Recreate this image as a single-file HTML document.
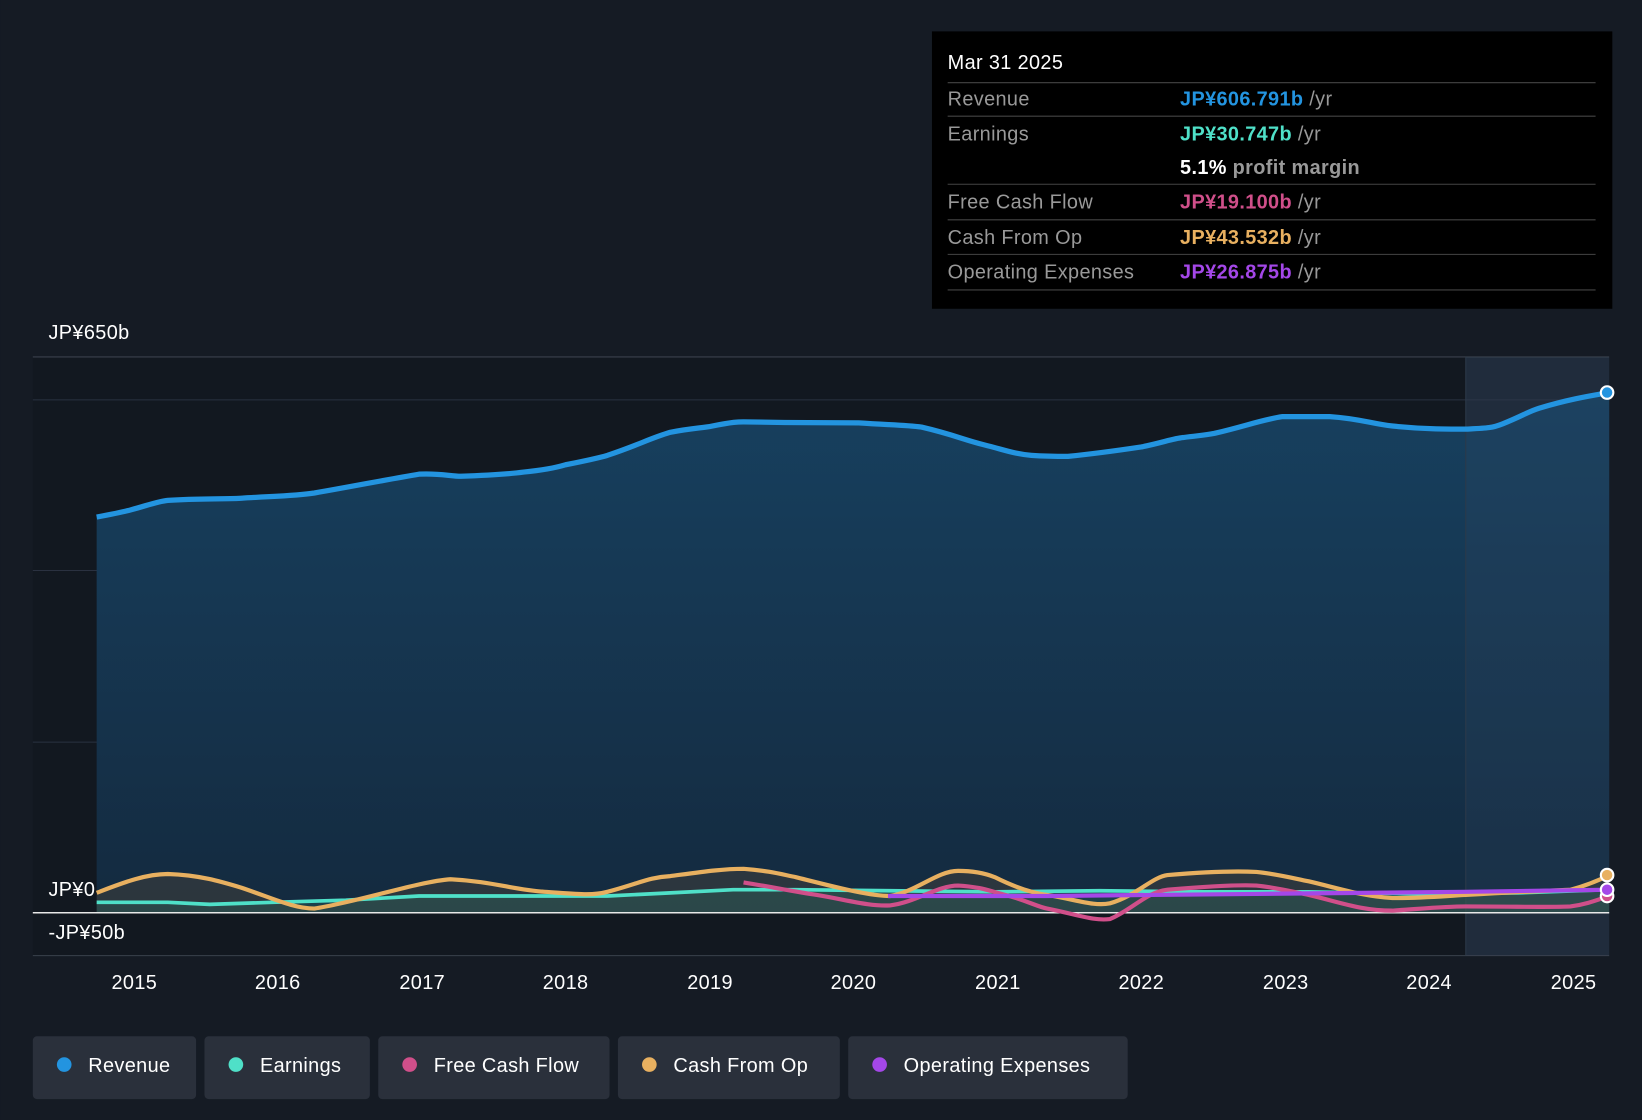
<!DOCTYPE html>
<html><head><meta charset="utf-8"><style>
html,body{margin:0;padding:0;background:#151b24;}
svg{display:block;font-family:"Liberation Sans",Roboto,sans-serif;letter-spacing:0.35px;}
</style></head><body>
<svg width="1642" height="1120" viewBox="0 0 1568 1070" xmlns="http://www.w3.org/2000/svg">
<defs>
<linearGradient id="rg" x1="0" y1="0" x2="0" y2="1"><stop offset="0" stop-color="#17405f"/><stop offset="1" stop-color="#142a3f"/></linearGradient>
</defs>
<rect width="1568" height="1070" fill="#151b24"/>
<rect x="31" y="341" width="1506" height="572" fill="#121820"/>
<rect x="1400" y="341" width="137" height="572" fill="#1b2533"/>
<line x1="31" y1="341" x2="1537" y2="341" stroke="#3a414c"/>
<line x1="31" y1="382" x2="1537" y2="382" stroke="#2a3140"/>
<line x1="31" y1="545" x2="1537" y2="545" stroke="#2a3140"/>
<line x1="31" y1="709" x2="1537" y2="709" stroke="#2a3140"/>
<line x1="31" y1="913" x2="1537" y2="913" stroke="#3a414c"/>
<path d="M92,494 C108,491 118,489 125,487 C140,483 150,479 160,478 C190,476 210,477 230,476 C260,474 280,474 300,471 C340,464 370,458 400,453 C420,452 430,455 440,455 C470,454 485,453 500,451 C520,449 530,447 540,444 C560,440 570,438 580,435 C610,425 620,419 640,413 C660,409 670,409 680,407 C700,403 705,403 710,403 C760,404 790,404 820,404 C850,406 865,406 880,408 C910,415 920,420 940,425 C960,430 970,434 985,435 C1000,436 1010,436 1020,436 C1050,433 1070,430 1090,427 C1110,423 1120,419 1130,418 C1145,416 1150,416 1160,414 C1190,407 1205,401 1225,398 C1245,398 1255,398 1270,398 C1300,400 1310,405 1330,407 C1360,410 1380,410 1400,410 C1420,409 1425,409 1435,405 C1455,397 1460,393 1470,390 C1500,381 1520,378 1537,375 L1537,872 L92,872 Z" fill="url(#rg)"/>
<rect x="1400" y="341" width="137" height="572" fill="#3a4f6a" opacity="0.18"/>
<line x1="1400" y1="341" x2="1400" y2="913" stroke="#2c3a4a"/>
<path d="M92,494 C108,491 118,489 125,487 C140,483 150,479 160,478 C190,476 210,477 230,476 C260,474 280,474 300,471 C340,464 370,458 400,453 C420,452 430,455 440,455 C470,454 485,453 500,451 C520,449 530,447 540,444 C560,440 570,438 580,435 C610,425 620,419 640,413 C660,409 670,409 680,407 C700,403 705,403 710,403 C760,404 790,404 820,404 C850,406 865,406 880,408 C910,415 920,420 940,425 C960,430 970,434 985,435 C1000,436 1010,436 1020,436 C1050,433 1070,430 1090,427 C1110,423 1120,419 1130,418 C1145,416 1150,416 1160,414 C1190,407 1205,401 1225,398 C1245,398 1255,398 1270,398 C1300,400 1310,405 1330,407 C1360,410 1380,410 1400,410 C1420,409 1425,409 1435,405 C1455,397 1460,393 1470,390 C1500,381 1520,378 1537,375" fill="none" stroke="#2394e0" stroke-width="5"/>
<path d="M92,853 C120,842 140,835 160,835 C190,836 210,842 230,848 C260,858 280,868 300,868 C340,862 400,842 430,840 C470,842 490,850 520,852 C550,854 565,856 580,852 C610,844 620,838 640,837 C670,833 690,830 710,830 C735,832 745,835 760,838 C800,848 830,856 850,856 C875,852 895,832 915,832 C930,832 940,834 950,838 C970,848 985,853 1000,855 C1030,860 1045,866 1060,863 C1085,856 1100,838 1115,836 C1150,833 1180,832 1200,833 C1220,835 1235,839 1250,842 C1280,849 1300,856 1330,858 C1360,858 1380,856 1400,855 C1450,852 1480,851 1500,850 C1515,846 1525,842 1537,836 L1537,872 L92,872 Z" fill="#5a4a3a" opacity="0.35"/>
<path d="M92,862 L160,862 L200,864 L260,862 L330,860 L400,856 L500,856 L580,856 L640,853 L700,850 L760,850 L850,851 L950,852 L1050,851 L1150,852 L1250,852 L1350,854 L1450,853 L1537,850 L1537,872 L92,872 Z" fill="#2a6a60" opacity="0.35"/>
<line x1="31" y1="872" x2="1537" y2="872" stroke="#e8e8e8" stroke-width="1.5"/>
<path d="M92,862 L160,862 L200,864 L260,862 L330,860 L400,856 L500,856 L580,856 L640,853 L700,850 L760,850 L850,851 L950,852 L1050,851 L1150,852 L1250,852 L1350,854 L1450,853 L1537,850" fill="none" stroke="#4fe0c8" stroke-width="3.5"/>
<path d="M92,853 C120,842 140,835 160,835 C190,836 210,842 230,848 C260,858 280,868 300,868 C340,862 400,842 430,840 C470,842 490,850 520,852 C550,854 565,856 580,852 C610,844 620,838 640,837 C670,833 690,830 710,830 C735,832 745,835 760,838 C800,848 830,856 850,856 C875,852 895,832 915,832 C930,832 940,834 950,838 C970,848 985,853 1000,855 C1030,860 1045,866 1060,863 C1085,856 1100,838 1115,836 C1150,833 1180,832 1200,833 C1220,835 1235,839 1250,842 C1280,849 1300,856 1330,858 C1360,858 1380,856 1400,855 C1450,852 1480,851 1500,850 C1515,846 1525,842 1537,836" fill="none" stroke="#e8b060" stroke-width="4"/>
<path d="M710,843 C740,848 760,852 780,855 C810,860 830,866 850,865 C875,862 895,846 915,846 C935,847 945,851 960,855 C980,860 990,866 1000,868 C1030,874 1045,880 1060,878 C1080,870 1095,852 1115,850 C1150,847 1180,845 1200,846 C1220,848 1235,852 1250,855 C1280,862 1300,870 1330,870 C1360,868 1380,866 1400,866 C1450,866 1480,867 1500,866 C1515,864 1525,860 1537,856" fill="none" stroke="#d04f8a" stroke-width="4"/>
<path d="M848,856 L1000,856 L1100,855 L1200,854 L1300,853 L1400,852 L1537,850" fill="none" stroke="#a447e8" stroke-width="4"/>
<circle cx="1535" cy="375" r="6" fill="#2394e0" stroke="#fff" stroke-width="2"/>
<circle cx="1535" cy="836" r="6" fill="#e8b060" stroke="#fff" stroke-width="2"/>
<circle cx="1535" cy="856" r="6" fill="#d04f8a" stroke="#fff" stroke-width="2"/>
<circle cx="1535" cy="850" r="6" fill="#a447e8" stroke="#fff" stroke-width="2"/>
<g fill="#fff" font-size="19">
<text x="46" y="324">JP¥650b</text>
<text x="46" y="856">JP¥0</text>
<text x="46" y="897">-JP¥50b</text>
</g>
<g fill="#fff" font-size="19" text-anchor="middle">
<text x="128" y="945">2015</text><text x="265" y="945">2016</text><text x="403" y="945">2017</text><text x="540" y="945">2018</text><text x="678" y="945">2019</text><text x="815" y="945">2020</text><text x="953" y="945">2021</text><text x="1090" y="945">2022</text><text x="1228" y="945">2023</text><text x="1365" y="945">2024</text><text x="1503" y="945">2025</text>
</g>
<rect x="890" y="30" width="650" height="265" fill="#000"/>
<g stroke="#444" stroke-width="1"><line x1="905" y1="79" x2="1524" y2="79"/><line x1="905" y1="111" x2="1524" y2="111"/><line x1="905" y1="176" x2="1524" y2="176"/><line x1="905" y1="210" x2="1524" y2="210"/><line x1="905" y1="243" x2="1524" y2="243"/><line x1="905" y1="277" x2="1524" y2="277"/></g>
<g font-size="19">
<text x="905" y="66" fill="#fff">Mar 31 2025</text>
<text x="905" y="101" fill="#999">Revenue</text>
<text x="905" y="134" fill="#999">Earnings</text>
<text x="905" y="199" fill="#999">Free Cash Flow</text>
<text x="905" y="233" fill="#999">Cash From Op</text>
<text x="905" y="266" fill="#999">Operating Expenses</text>
<text x="1127" y="101" font-weight="bold" fill="#2394e0">JP¥606.791b <tspan fill="#999" font-weight="normal">/yr</tspan></text>
<text x="1127" y="134" font-weight="bold" fill="#4fe0c8">JP¥30.747b <tspan fill="#999" font-weight="normal">/yr</tspan></text>
<text x="1127" y="166" font-weight="bold" fill="#fff">5.1% <tspan fill="#999">profit margin</tspan></text>
<text x="1127" y="199" font-weight="bold" fill="#d04f8a">JP¥19.100b <tspan fill="#999" font-weight="normal">/yr</tspan></text>
<text x="1127" y="233" font-weight="bold" fill="#e8b060">JP¥43.532b <tspan fill="#999" font-weight="normal">/yr</tspan></text>
<text x="1127" y="266" font-weight="bold" fill="#a447e8">JP¥26.875b <tspan fill="#999" font-weight="normal">/yr</tspan></text>
</g>
<g font-size="19" fill="#fff">
<rect x="31" y="990" width="156" height="60" rx="4" fill="#2a303b"/><circle cx="61" cy="1017" r="7" fill="#2394e0"/><text x="84" y="1024">Revenue</text>
<rect x="195" y="990" width="158" height="60" rx="4" fill="#2a303b"/><circle cx="225" cy="1017" r="7" fill="#4fe0c8"/><text x="248" y="1024">Earnings</text>
<rect x="361" y="990" width="221" height="60" rx="4" fill="#2a303b"/><circle cx="391" cy="1017" r="7" fill="#d04f8a"/><text x="414" y="1024">Free Cash Flow</text>
<rect x="590" y="990" width="212" height="60" rx="4" fill="#2a303b"/><circle cx="620" cy="1017" r="7" fill="#e8b060"/><text x="643" y="1024">Cash From Op</text>
<rect x="810" y="990" width="267" height="60" rx="4" fill="#2a303b"/><circle cx="840" cy="1017" r="7" fill="#a447e8"/><text x="863" y="1024">Operating Expenses</text>
</g>
</svg>
</body></html>
